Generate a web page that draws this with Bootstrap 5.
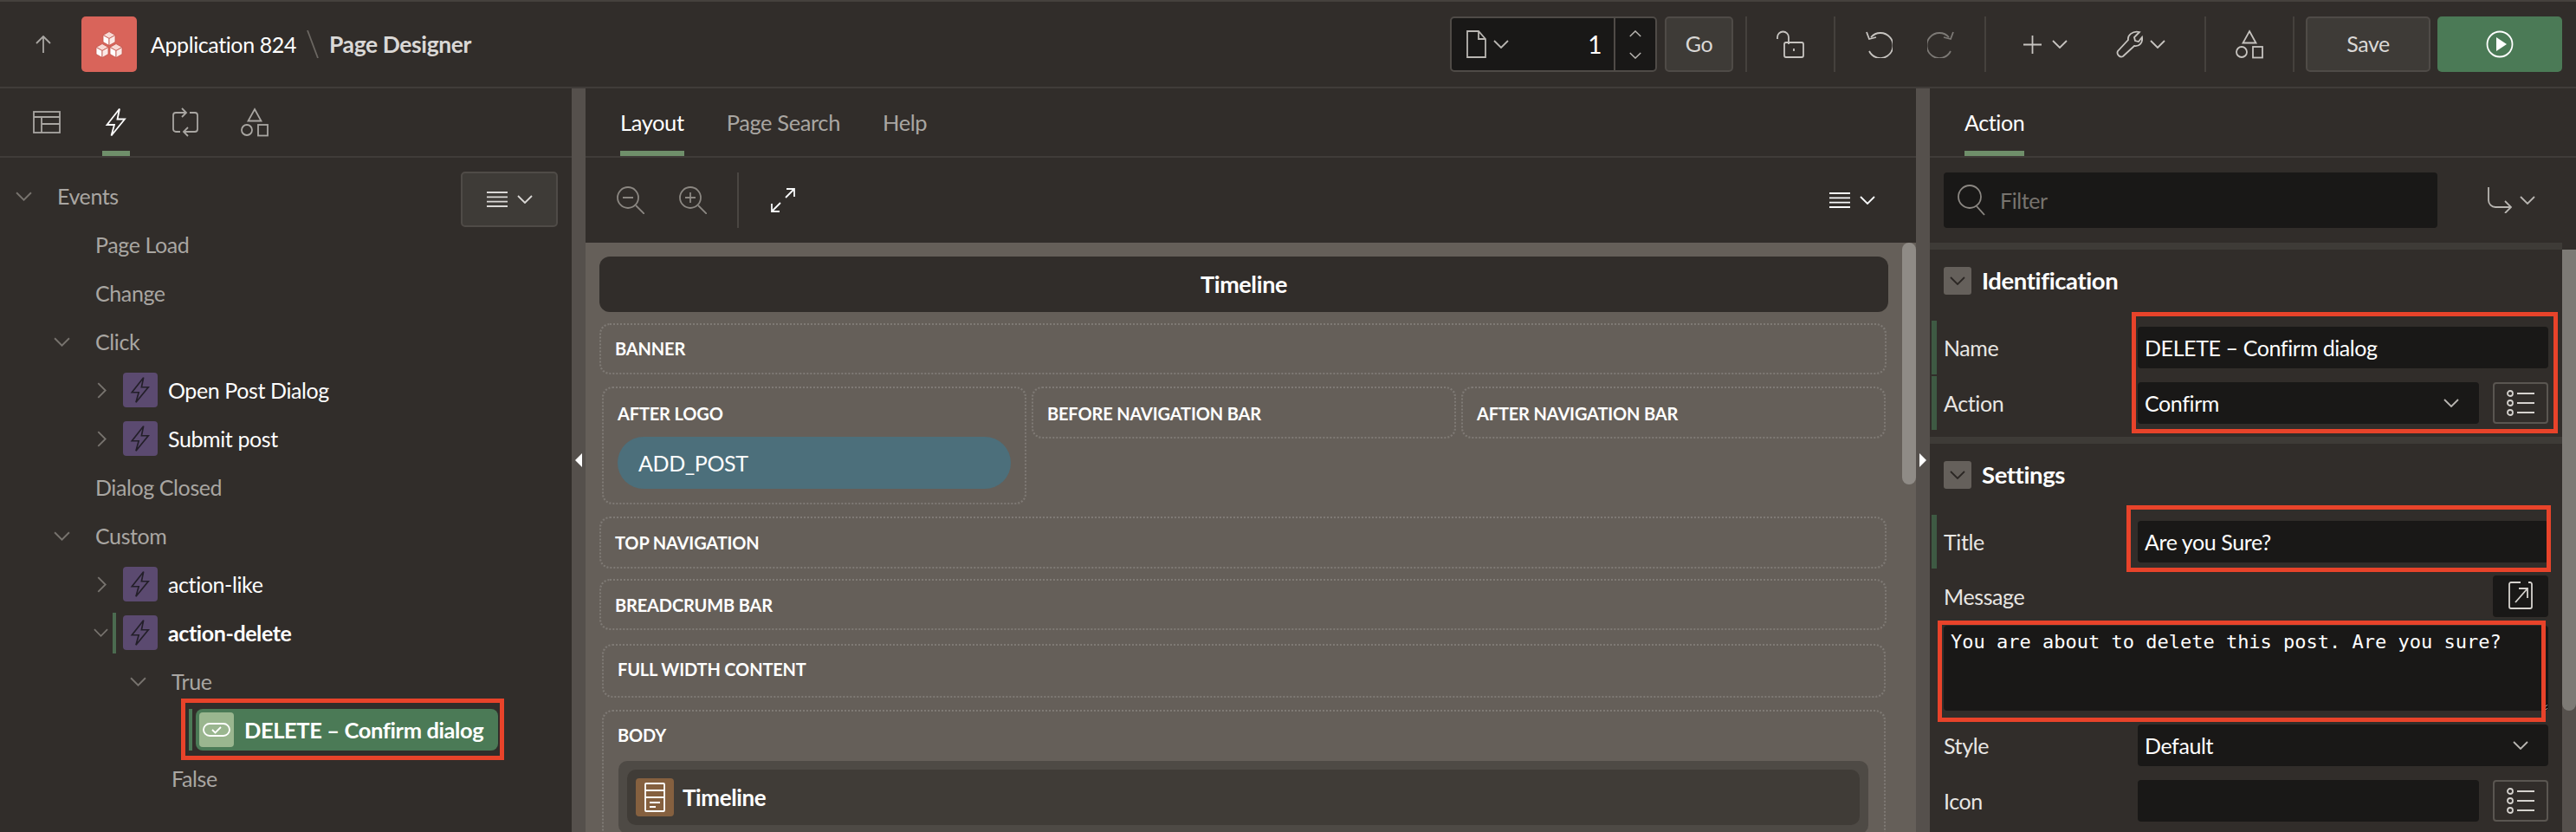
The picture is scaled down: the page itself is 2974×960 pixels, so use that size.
<!DOCTYPE html>
<html lang="en">
<head>
  <meta charset="UTF-8" />
  <title>Page Designer</title>
  <link href="https://cdn.jsdelivr.net/npm/bootstrap@5.3.0/dist/css/bootstrap.min.css" rel="stylesheet" />
  <style>
    html, body { height: 100%; }
    body {
      background: #312d2a;
      color: #fff;
      font-family: "Lato", "Noto Sans", sans-serif;
      font-size: 25px;
      letter-spacing: -.4px;
      line-height: 32px;
      overflow: hidden;
    }
    svg { display: block; flex: none; fill: none; stroke: currentColor; stroke-width: 1.800; }

    /* top bar */
    .pd-head { height: 102px; border-top: 2px solid #45413d; border-bottom: 2px solid #403c39; padding-right: 16px; }
    .pd-up { margin-left: 41px; color: #a9a6a2; }
    .pd-logo { width: 64px; height: 64px; margin-left: 35px; background: #d9645a; border-radius: 5px; }
    .pd-app { margin-left: 16px; }
    .pd-slash { margin: 0 12px; color: #6b6762; }
    .pd-crumb { color: #dad8d6; font-weight: 700; font-size: 26.500px; }
    .pd-finder { width: 239px; height: 64px; background: #191817; border: 2px solid #4f4b47; border-radius: 5px; color: #b9b6b2; }
    .pd-finder-num { color: #fff; font-size: 28px; padding-right: 14px; }
    .pd-finder-spin { width: 48px; border-left: 2px solid #4f4b47; gap: 17px; }
    .pd-btn { height: 64px; background: #3e3b37; border: 2px solid #4f4b47; border-radius: 5px; color: #dad8d6; font-size: 25px; letter-spacing: -.4px; padding: 0; }
    .pd-go { width: 79px; margin-left: 9px; }
    .pd-save { width: 144px; margin-left: 13px; }
    .pd-run { width: 144px; height: 64px; margin-left: 8px; background: #4b7a56; border-radius: 5px; color: #fff; }
    .pd-sep { width: 2px; height: 64px; background: #45413d; }
    .pd-sep-go { margin-left: 14px; }
    .pd-cell { height: 64px; color: #c7c4c0; }
    .pd-cell-100 { width: 100px; }
    .pd-cell-undo { width: 172px; gap: 40px; }
    .pd-cell-add { width: 252px; padding-left: 43px; }
    .pd-plus-chev { margin-left: 12px; }
    .pd-wrench { margin-left: 55px; }

    /* panels */
    .pd-main { height: 858px; }
    .pd-left { width: 660px; }
    .pd-center { width: 1536px; }
    .pd-right { width: 746px; }
    .pd-split { width: 16px; background: #55504c; color: #fff; }
    .pd-split svg { fill: #fff; stroke: none; }
    .pd-tabs { height: 80px; border-bottom: 2px solid #403c39; }
    .pd-tab { height: 78px; color: #a9a6a2; padding-top: 6px; border-bottom: 6px solid transparent; }
    .pd-tab.is-on { color: #fff; border-bottom-color: #6f8f6a; }
    .pd-tabs-icons { padding-left: 38px; }
    .pd-icontab { width: 32px; margin-right: 48px; color: #a9a6a2; }
    .pd-tabs-center { padding-left: 40px; gap: 49px; font-size: 25.500px; }
    .pd-tabs-right { padding-left: 40px; }

    /* tree */
    .pd-tree { padding-top: 16px; color: #a9a6a2; }
    .pd-menu { position: absolute; top: 96px; right: 16px; width: 112px; height: 64px; gap: 11px; }
    .pd-row { height: 56px; position: relative; }
    .pd-chev { color: #77736e; }
    .pd-ml0 { margin-left: 18px; width: 48px; }
    .pd-ml1 { margin-left: 62px; width: 48px; }
    .pd-ml-true { margin-left: 150px; width: 48px; }
    .pd-leaf { margin-left: 110px; }
    .pd-leaf2 { margin-left: 198px; }
    .pd-ml-item { margin-left: 112px; width: 30px; }
    .pd-ml-open { margin-left: 108px; width: 22px; }
    .pd-actbar { width: 4px; height: 47px; background: #4b6b50; margin-right: 8px; }
    .pd-ico { width: 40px; height: 40px; background: #5b4a70; border-radius: 4px; color: #231f29; margin-right: 12px; }
    .pd-item { color: #fff; }
    .pd-sel-bar { width: 4px; height: 48px; margin-left: 218px; margin-right: 4px; background: #4b7a56; }
    .pd-sel { width: 349px; height: 48px; background: #4b7a56; border-radius: 8px; color: #fff; font-weight: 700; font-size: 25.500px; padding-left: 4px; }
    .pd-sel-ico { width: 40px; height: 40px; background: #9ab68f; border-radius: 4px; margin-right: 12px; }

    /* red marks lying over the screen */
    .pd-note { position: absolute; border: 5px solid #e8432a; pointer-events: none; }
    .pd-note-tree { left: 209px; top: -8px; width: 373px; height: 71px; }
    .pd-note-a { left: 233px; top: 258px; width: 492px; height: 140px; }
    .pd-note-b { left: 227px; top: 481px; width: 490px; height: 77px; }
    .pd-note-c { left: 9px; top: 614px; width: 702px; height: 117px; }

    /* layout canvas */
    .pd-tools { height: 98px; padding-left: 36px; padding-right: 47px; color: #8b8782; }
    .pd-zoomin { margin-left: 40px; }
    .pd-tools-sep { width: 2px; height: 64px; background: #4a4642; margin: 0 37px 0 35px; }
    .pd-tools-menu { gap: 11px; }
    .pd-canvas { height: 680px; background: #655f59; padding: 16px 32px 0 16px; overflow: hidden; position: relative; }
    .pd-scroll { position: absolute; top: 0; right: 0; width: 16px; height: 279px; background: #8f8b86; border-radius: 8px; }
    .pd-pagehead { height: 64px; background: #312d2a; border-radius: 12px; font-weight: 700; font-size: 27px; }
    .pd-zone { border: 2px dotted #7f7a75; border-radius: 12px; font-size: 20px; font-weight: 700; letter-spacing: -.15px; padding: 12px 16px 0; min-height: 60px; }
    .pd-z-banner { margin-top: 13px; margin-right: 2px; min-height: 59px; padding-top: 11px; }
    .pd-z-row { margin: 14px 3px 0 3px; gap: 6px; }
    .pd-z-row .pd-zone { padding-top: 13px; }
    .pd-z-row .pd-z-logo { padding-bottom: 16px; }
    .pd-z-top { margin-top: 14px; margin-right: 2px; }
    .pd-z-crumb { margin-top: 12px; margin-right: 2px; min-height: 59px; }
    .pd-z-full { margin: 16px 3px 0 3px; min-height: 62px; padding-top: 11px; }
    .pd-z-body { margin: 14px 3px 0 3px; min-height: 300px; padding-top: 11px; }
    .pd-addpost { height: 60px; margin-top: 11px; background: #4c6f7b; border-radius: 30px; padding: 0 24px; font-size: 25px; font-weight: 400; letter-spacing: -.4px; }
    .pd-region { margin: 14px 2px 0 1px; background: #4e4a45; border-radius: 10px; padding: 10px; }
    .pd-region-in { height: 64px; background: #403c37; border-radius: 10px; padding-left: 10px; font-size: 26px; letter-spacing: -.4px; }
    .pd-region-ico { width: 44px; height: 44px; background: #85603f; border-radius: 4px; margin-right: 10px; }

    /* property editor */
    .pd-filterbar { height: 98px; padding: 16px; }
    .pd-filter { width: 570px; height: 64px; background: #191817; border-radius: 4px; padding-left: 16px; color: #8b8782; }
    .pd-filter input { background: transparent; border: 0; outline: 0; width: 400px; margin-left: 17px; font-size: 25px; letter-spacing: -.4px; color: #fff; padding: 0; }
    .pd-filter input::placeholder { color: #77736e; opacity: 1; }
    .pd-goto { margin-left: 58px; gap: 9px; color: #b9b6b2; }
    .pd-strip { height: 8px; background: #3e3b37; }
    .pd-strip-top { margin-right: 16px; }
    .pd-strip-mid { margin: 8px 16px 0 0; }
    .pd-props { height: 672px; position: relative; overflow: hidden; }
    .pd-vscroll { position: absolute; top: -8px; right: 0; width: 16px; height: 540px; background: #7d7a75; border-radius: 8px; }
    .pd-track { position: absolute; top: -8px; bottom: 0; right: 0; width: 16px; background: #55504c; }
    .pd-group { height: 72px; padding-left: 16px; font-size: 27.500px; font-weight: 700; }
    .pd-toggle { width: 32px; height: 32px; background: #65605b; border-radius: 3px; color: #2b2724; margin-right: 12px; }
    .pd-prop { height: 62px; margin: 2px 32px 0 2px; border-left: 6px solid transparent; }
    .pd-prop-first { margin-top: 10px; }
    .pd-prop.is-req { border-left-color: #3e5a43; }
    .pd-label { width: 232px; padding-left: 8px; color: #e8e6e3; flex: none; }
    .pd-input.form-control, .pd-input.form-select {
      height: 48px; background-color: #191817; border: 0; border-radius: 4px; color: #fff;
      font-size: 25px; letter-spacing: -.4px; line-height: 32px; padding: 0 8px; box-shadow: none;
    }
    .pd-input.form-select {
      padding-right: 48px;
      background-size: 18px 10px; background-position: right 23px center;
      background-image: url("data:image/svg+xml,%3Csvg xmlns='http://www.w3.org/2000/svg' viewBox='1 1 18 10'%3E%3Cpath d='M2 2l8 8 8-8' fill='none' stroke='%23b9b6b2' stroke-width='1.800'/%3E%3C/svg%3E");
    }
    .pd-listbtn { width: 64px; height: 48px; margin-left: 16px; flex: none; background: #312d2a; border: 2px solid #5a5651; border-radius: 4px; color: #d5d2ce; }
    .pd-expbtn { width: 64px; height: 48px; background: #191817; border-radius: 4px; color: #d5d2ce; }
    .pd-row-msg { height: 48px; margin: 8px 32px 0 2px; border-left: 6px solid transparent; }
    .pd-msg.form-control {
      display: block; width: 698px; height: 98px; margin: 10px 0 0 16px; background-color: #191817; border: 0; border-radius: 4px;
      color: #fff; padding: 3px 8px; box-shadow: none;
      font-family: "DejaVu Sans Mono", "Liberation Mono", monospace; font-size: 22px; letter-spacing: 0; line-height: 32px;
    }
    .pd-prop-style { margin-top: 9px; }
  </style>
</head>
<body>

<svg width="0" height="0" class="position-absolute">
  <symbol id="i-down" viewBox="1 1 18 10"><path d="M2 2l8 8 8-8"/></symbol>
  <symbol id="i-right" viewBox="1 1 10 18"><path d="M2 2l8 8-8 8"/></symbol>
  <symbol id="i-up" viewBox="1 1 18 10"><path d="M2 10l8-8 8 8"/></symbol>
  <symbol id="i-bolt" viewBox="0 0 26 34"><path d="M17 1.500 2.500 20H11L7.500 32.500 23 13.500H14.500Z"/></symbol>
  <symbol id="i-shapes" viewBox="0 0 32 34"><path d="M16 2l7.500 13.500h-15Z"/><circle cx="7" cy="26" r="6"/><rect x="20" y="20" width="11" height="12.500"/></symbol>
  <symbol id="i-menu" viewBox="0 0 24 20"><path d="M0 2h24M0 7.300h24M0 12.700h24M0 18h24"/></symbol>
  <symbol id="i-list" viewBox="0 0 32 30"><circle cx="4" cy="4" r="3"/><circle cx="4" cy="15" r="3"/><circle cx="4" cy="26" r="3"/><path d="M12 4h20M12 15h20M12 26h20"/></symbol>
  <symbol id="i-cube" viewBox="-7.500 -8.500 15 17">
    <path d="M0-8 7-4 0 0-7-4Z" fill="#f8d9d4" stroke="#c2564c" stroke-width=".8"/>
    <path d="M-7-4 0 0V8L-7 4Z" fill="#fff" stroke="#c2564c" stroke-width=".8"/>
    <path d="M7-4 0 0V8L7 4Z" fill="#fbe9e6" stroke="#c2564c" stroke-width=".8"/>
  </symbol>
</svg>

<header class="pd-head d-flex align-items-center">
  <svg class="pd-up" width="18" height="20" viewBox="0 0 18 20"><path d="M9 20V2M1 9l8-8 8 8"/></svg>
  <div class="pd-logo d-flex align-items-center justify-content-center">
    <svg width="32" height="31" viewBox="0 0 32 31" stroke="none">
      <use href="#i-cube" x="8" y="0" width="16" height="17"/>
      <use href="#i-cube" x="0" y="14" width="16" height="17"/>
      <use href="#i-cube" x="16" y="14" width="16" height="17"/>
    </svg>
  </div>
  <span class="pd-app">Application 824</span>
  <svg class="pd-slash" width="14" height="32" viewBox="0 0 14 32"><path d="M1 0l12 32"/></svg>
  <span class="pd-crumb">Page Designer</span>

  <div class="ms-auto d-flex align-items-center">
    <div class="pd-finder d-flex align-items-center">
      <svg class="ms-3" width="24" height="32" viewBox="0 0 24 32"><path d="M2 1h13l8 9v21H2Z M15 1v9h8"/></svg>
      <svg class="ms-2" width="18" height="10"><use href="#i-down"/></svg>
      <span class="pd-finder-num ms-auto">1</span>
      <div class="pd-finder-spin h-100 d-flex flex-column align-items-center justify-content-center">
        <svg width="14" height="8"><use href="#i-up"/></svg>
        <svg width="14" height="8"><use href="#i-down"/></svg>
      </div>
    </div>
    <button class="btn pd-btn pd-go" type="button">Go</button>
    <div class="pd-sep pd-sep-go"></div>
    <div class="pd-cell pd-cell-100 d-flex align-items-center justify-content-center">
      <svg width="32" height="32" viewBox="0 0 32 32"><path d="M1 10V8a6.500 6.500 0 0 1 13 0v8"/><rect x="9" y="14" width="22" height="17" rx="2"/><path d="M20 21v3"/></svg>
    </div>
    <div class="pd-sep"></div>
    <div class="pd-cell pd-cell-undo d-flex align-items-center justify-content-center">
      <svg width="31" height="32" viewBox="0 0 31 32"><path d="M6 8a14.500 14.500 0 1 1-2 16M1 2l3 8 8-2"/></svg>
      <svg class="opacity-50" width="31" height="32" viewBox="0 0 31 32"><path d="M25 8a14.500 14.500 0 1 0 2 16M30 2l-3 8-8-2"/></svg>
    </div>
    <div class="pd-sep"></div>
    <div class="pd-cell pd-cell-add d-flex align-items-center">
      <svg width="21" height="21" viewBox="0 0 21 21"><path d="M10.500 0v21M0 10.500h21"/></svg>
      <svg class="pd-plus-chev" width="18" height="10"><use href="#i-down"/></svg>
      <svg class="pd-wrench" width="32" height="32" viewBox="0 0 32 32"><path d="M28 2l-6 6 1 4 4 1 4-5c1 6-3 11-9 10L9 30c-3 2-8-2-6-6l12-13C14 6 20 0 28 2Z"/></svg>
      <svg class="ms-2" width="18" height="10"><use href="#i-down"/></svg>
    </div>
    <div class="pd-sep"></div>
    <div class="pd-cell pd-cell-100 d-flex align-items-center justify-content-center">
      <svg width="32" height="34"><use href="#i-shapes"/></svg>
    </div>
    <div class="pd-sep"></div>
    <button class="btn pd-btn pd-save" type="button">Save</button>
    <div class="pd-run d-flex align-items-center justify-content-center">
      <svg width="32" height="32" viewBox="0 0 32 32"><circle cx="16" cy="16" r="14.500"/><path d="M12 8l12 8-12 8Z" fill="#fff" stroke="none"/></svg>
    </div>
  </div>
</header>

<div class="pd-main d-flex">
  <section class="pd-left position-relative">
    <div class="pd-tabs pd-tabs-icons d-flex align-items-center">
      <svg class="pd-icontab" width="32" height="26" viewBox="0 0 32 26"><rect x="1" y="1" width="30" height="24"/><path d="M1 7h30M10 7v18M10 15h21"/></svg>
      <div class="pd-tab is-on d-flex align-items-center pd-icontab text-white">
        <svg class="mx-auto" width="26" height="34"><use href="#i-bolt"/></svg>
      </div>
      <svg class="pd-icontab" width="32" height="34" viewBox="0 0 32 34"><path d="M10 28H5a3 3 0 0 1-3-3V9a3 3 0 0 1 3-3H17M12 1l5 5-5 5M21 6H27a3 3 0 0 1 3 3V25a3 3 0 0 1-3 3H14M19 23l-5 5 5 5"/></svg>
      <svg class="pd-icontab" width="32" height="34"><use href="#i-shapes"/></svg>
    </div>
    <div class="btn pd-btn pd-menu d-flex align-items-center justify-content-center">
      <svg width="24" height="20"><use href="#i-menu"/></svg>
      <svg width="18" height="10"><use href="#i-down"/></svg>
    </div>
    <div class="pd-tree">
      <div class="pd-row d-flex align-items-center"><div class="pd-chev pd-ml0"><svg width="19" height="11"><use href="#i-down"/></svg></div>Events</div>
      <div class="pd-row d-flex align-items-center"><span class="pd-leaf">Page Load</span></div>
      <div class="pd-row d-flex align-items-center"><span class="pd-leaf">Change</span></div>
      <div class="pd-row d-flex align-items-center"><div class="pd-chev pd-ml1"><svg width="19" height="11"><use href="#i-down"/></svg></div>Click</div>
      <div class="pd-row d-flex align-items-center">
        <div class="pd-chev pd-ml-item"><svg width="11" height="19"><use href="#i-right"/></svg></div>
        <div class="pd-ico d-flex align-items-center justify-content-center"><svg width="24" height="32"><use href="#i-bolt"/></svg></div>
        <span class="pd-item">Open Post Dialog</span>
      </div>
      <div class="pd-row d-flex align-items-center">
        <div class="pd-chev pd-ml-item"><svg width="11" height="19"><use href="#i-right"/></svg></div>
        <div class="pd-ico d-flex align-items-center justify-content-center"><svg width="24" height="32"><use href="#i-bolt"/></svg></div>
        <span class="pd-item">Submit post</span>
      </div>
      <div class="pd-row d-flex align-items-center"><span class="pd-leaf">Dialog Closed</span></div>
      <div class="pd-row d-flex align-items-center"><div class="pd-chev pd-ml1"><svg width="19" height="11"><use href="#i-down"/></svg></div>Custom</div>
      <div class="pd-row d-flex align-items-center">
        <div class="pd-chev pd-ml-item"><svg width="11" height="19"><use href="#i-right"/></svg></div>
        <div class="pd-ico d-flex align-items-center justify-content-center"><svg width="24" height="32"><use href="#i-bolt"/></svg></div>
        <span class="pd-item">action-like</span>
      </div>
      <div class="pd-row d-flex align-items-center">
        <div class="pd-chev pd-ml-open"><svg width="17" height="10"><use href="#i-down"/></svg></div>
        <div class="pd-actbar"></div>
        <div class="pd-ico d-flex align-items-center justify-content-center"><svg width="24" height="32"><use href="#i-bolt"/></svg></div>
        <span class="pd-item fw-bold">action-delete</span>
      </div>
      <div class="pd-row d-flex align-items-center"><div class="pd-chev pd-ml-true"><svg width="19" height="11"><use href="#i-down"/></svg></div>True</div>
      <div class="pd-row d-flex align-items-center">
        <div class="pd-sel-bar"></div>
        <div class="pd-sel d-flex align-items-center">
          <div class="pd-sel-ico d-flex align-items-center justify-content-center">
            <svg width="32" height="16" viewBox="0 0 32 16" stroke="#fff"><rect x="1" y="1" width="30" height="14" rx="7"/><path d="M11 8l3.500 3.500L21 5"/></svg>
          </div>
          DELETE – Confirm dialog
        </div>
        <div class="pd-note pd-note-tree"></div>
      </div>
      <div class="pd-row d-flex align-items-center"><span class="pd-leaf2">False</span></div>
    </div>
  </section>

  <div class="pd-split d-flex align-items-center">
    <svg class="ms-1" width="8" height="16" viewBox="0 0 8 16"><path d="M8 0v16L0 8Z"/></svg>
  </div>

  <section class="pd-center">
    <div class="pd-tabs pd-tabs-center d-flex">
      <div class="pd-tab is-on d-flex align-items-center">Layout</div>
      <div class="pd-tab d-flex align-items-center">Page Search</div>
      <div class="pd-tab d-flex align-items-center">Help</div>
    </div>
    <div class="pd-tools d-flex align-items-center">
      <svg width="32" height="32" viewBox="0 0 32 32"><circle cx="13" cy="13" r="12"/><path d="M22 22l10 10M7 13h12"/></svg>
      <svg class="pd-zoomin" width="32" height="32" viewBox="0 0 32 32"><circle cx="13" cy="13" r="12"/><path d="M22 22l10 10M7 13h12M13 7v12"/></svg>
      <div class="pd-tools-sep"></div>
      <svg class="text-light" width="28" height="28" viewBox="0 0 28 28"><path d="M17 11 27 1M18 1h9v9M11 17 1 27M1 18v9h9"/></svg>
      <div class="pd-tools-menu ms-auto d-flex align-items-center text-light">
        <svg width="24" height="20"><use href="#i-menu"/></svg>
        <svg width="18" height="10"><use href="#i-down"/></svg>
      </div>
    </div>
    <div class="pd-canvas">
      <div class="pd-scroll"></div>
      <div class="pd-pagehead d-flex align-items-center justify-content-center">Timeline</div>
      <div class="pd-zone pd-z-banner">BANNER</div>
      <div class="pd-z-row d-flex align-items-start">
        <div class="pd-zone pd-z-logo flex-fill w-100">
          AFTER LOGO
          <div class="pd-addpost d-flex align-items-center">ADD_POST</div>
        </div>
        <div class="pd-zone flex-fill w-100">BEFORE NAVIGATION BAR</div>
        <div class="pd-zone flex-fill w-100">AFTER NAVIGATION BAR</div>
      </div>
      <div class="pd-zone pd-z-top">TOP NAVIGATION</div>
      <div class="pd-zone pd-z-crumb">BREADCRUMB BAR</div>
      <div class="pd-zone pd-z-full">FULL WIDTH CONTENT</div>
      <div class="pd-zone pd-z-body">
        BODY
        <div class="pd-region">
          <div class="pd-region-in d-flex align-items-center">
            <div class="pd-region-ico d-flex align-items-center justify-content-center">
              <svg width="24" height="34" viewBox="0 0 24 34" stroke="#fff"><rect x="1" y="1" width="22" height="32" rx="1"/><path d="M1 9h22M1 17h22M6 23h12M6 28h7"/></svg>
            </div>
            Timeline
          </div>
        </div>
      </div>
    </div>
  </section>

  <div class="pd-split d-flex align-items-center">
    <svg class="ms-1" width="8" height="16" viewBox="0 0 8 16"><path d="M0 0v16l8-8Z"/></svg>
  </div>

  <section class="pd-right position-relative">
    <div class="pd-tabs pd-tabs-right d-flex">
      <div class="pd-tab is-on d-flex align-items-center">Action</div>
    </div>
    <div class="pd-filterbar d-flex align-items-center">
      <div class="pd-filter d-flex align-items-center">
        <svg width="32" height="36" viewBox="0 0 32 36"><circle cx="14" cy="14" r="13"/><path d="M22 25l9 10"/></svg>
        <input type="text" placeholder="Filter" />
      </div>
      <div class="pd-goto d-flex align-items-center">
        <svg width="28" height="30" viewBox="0 0 28 30"><path d="M1 0v15a8 8 0 0 0 8 8h18M20 16l7 7-7 7"/></svg>
        <svg width="18" height="10"><use href="#i-down"/></svg>
      </div>
    </div>
    <div class="pd-strip pd-strip-top"></div>
    <div class="pd-props">
      <div class="pd-track"></div>
      <div class="pd-vscroll"></div>
      <div class="pd-group d-flex align-items-center">
        <div class="pd-toggle d-flex align-items-center justify-content-center"><svg width="18" height="10"><use href="#i-down"/></svg></div>
        Identification
      </div>
      <div class="pd-prop pd-prop-first is-req d-flex align-items-center">
        <div class="pd-label">Name</div>
        <input class="form-control pd-input" type="text" value="DELETE – Confirm dialog" />
      </div>
      <div class="pd-prop is-req d-flex align-items-center">
        <div class="pd-label">Action</div>
        <select class="form-select pd-input"><option>Confirm</option></select>
        <div class="pd-listbtn d-flex align-items-center justify-content-center"><svg width="32" height="30"><use href="#i-list"/></svg></div>
      </div>
      <div class="pd-strip pd-strip-mid"></div>
      <div class="pd-group d-flex align-items-center">
        <div class="pd-toggle d-flex align-items-center justify-content-center"><svg width="18" height="10"><use href="#i-down"/></svg></div>
        Settings
      </div>
      <div class="pd-prop pd-prop-first is-req d-flex align-items-center">
        <div class="pd-label">Title</div>
        <input class="form-control pd-input" type="text" value="Are you Sure?" />
      </div>
      <div class="pd-row-msg d-flex align-items-center">
        <div class="pd-label">Message</div>
        <div class="pd-expbtn ms-auto d-flex align-items-center justify-content-center">
          <svg width="28" height="34" viewBox="0 0 28 34"><path d="M14 1H3a2 2 0 0 0-2 2v26a2 2 0 0 0 2 2h22a2 2 0 0 0 2-2V3a2 2 0 0 0-2-2h-2M8 24 22 8M12 8h10v11"/></svg>
        </div>
      </div>
      <textarea class="form-control pd-msg">You are about to delete this post. Are you sure?</textarea>
      <div class="pd-prop pd-prop-style d-flex align-items-center">
        <div class="pd-label">Style</div>
        <select class="form-select pd-input"><option>Default</option></select>
      </div>
      <div class="pd-prop d-flex align-items-center">
        <div class="pd-label">Icon</div>
        <input class="form-control pd-input" type="text" />
        <div class="pd-listbtn d-flex align-items-center justify-content-center"><svg width="32" height="30"><use href="#i-list"/></svg></div>
      </div>
    </div>
    <div class="pd-note pd-note-a"></div>
    <div class="pd-note pd-note-b"></div>
    <div class="pd-note pd-note-c"></div>
  </section>
</div>

</body>
</html>
